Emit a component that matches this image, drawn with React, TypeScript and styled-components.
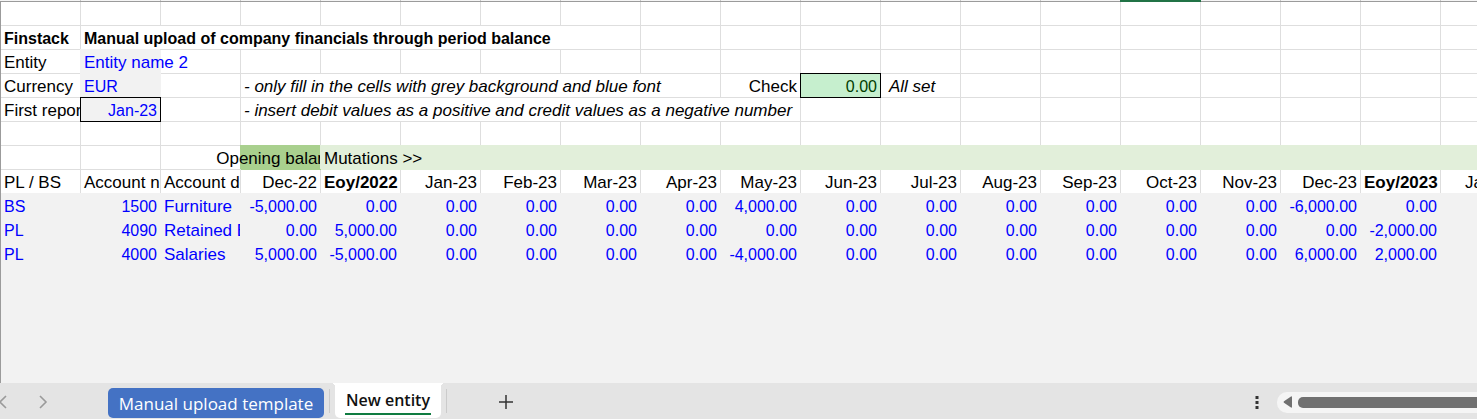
import React from "react";
import styled, { createGlobalStyle, css } from "styled-components";

const GRID = "#dedede";
const INPUT = "#f2f2f2";
const BLUE = "#0000ff";
const COLUMN = 80;

const GlobalStyle = createGlobalStyle`
  * { box-sizing: border-box; }
  body { margin: 0; background: #fff; overflow: hidden; }
`;

const Workbook = styled.div`
  display: flex;
  flex-direction: column;
  min-height: 100vh;
  overflow: hidden;
  font-family: "Liberation Sans", Arial, sans-serif;
  font-size: 17px;
  color: #000;
`;

const ColumnStrip = styled.div`
  display: flex;
  height: 2px;
  padding-left: 1px;
  background: #f5f5f5;
  border-bottom: 1px solid #9b9b9b;
`;

const ColumnEdge = styled.div<{ $selected?: boolean }>`
  flex: 0 0 ${COLUMN}px;
  height: 1px;
  border-right: 1px solid #c8c8c8;
  ${(p) =>
    p.$selected &&
    css`
      height: 2px;
      border-color: #217346;
      background: #217346;
      box-shadow: -1px 0 0 #217346;
    `}
`;

const Sheet = styled.main`
  flex: 1;
  overflow: hidden;
  background: ${INPUT};
  border-left: 1px solid #9b9b9b;
`;

const Grid = styled.table`
  table-layout: fixed;
  border-collapse: separate;
  border-spacing: 0;
  background: #fff;
`;

const Column = styled.col`
  width: ${COLUMN}px;
`;

type Fill = "input" | "opening" | "band" | "ok";

const fills: Record<Fill, string> = {
  input: INPUT,
  opening: "#a9d08e",
  band: "#e2efda",
  ok: "#c6efce",
};

interface CellProps {
  $fill?: Fill;
  $right?: boolean;
  $boxed?: boolean;
  $bold?: boolean;
  $italic?: boolean;
  $clip?: boolean;
  $indent?: boolean;
  $compact?: boolean;
}

const cellStyle = css<CellProps>`
  height: 24px;
  padding: 2px 3px 0;
  font-size: ${(p) => (p.$compact ? 16 : 17)}px;
  line-height: 21px;
  white-space: nowrap;
  text-align: ${(p) => (p.$right ? "right" : "left")};
  font-weight: ${(p) => (p.$bold ? 700 : 400)};
  font-style: ${(p) => (p.$italic ? "italic" : "normal")};
  border-right: 1px solid ${GRID};
  border-bottom: 1px solid ${GRID};
  ${(p) => p.$clip && "overflow: hidden;"}
  ${(p) => p.$indent && "padding-left: 8px;"}
  ${(p) =>
    p.$fill &&
    css`
      background: ${fills[p.$fill]};
      border-color: ${fills[p.$fill]};
      box-shadow: -1px -1px 0 ${fills[p.$fill]};
    `}
  ${(p) => p.$fill === "input" && `color: ${BLUE};`}
  ${(p) => p.$fill === "ok" && "color: #003c00;"}
  ${(p) =>
    p.$boxed &&
    css`
      border-color: #000;
      box-shadow: -1px 0 0 #000, 0 -1px 0 #000, -1px -1px 0 #000;
    `}
`;

const Cell = styled.td<CellProps>`
  ${cellStyle}
`;

const HeadCell = styled.th<CellProps>`
  ${cellStyle}
`;

/* Centred text that may run into the empty cell on its left, never to the right. */
const SpillLeft = styled.div`
  display: flex;
  justify-content: center;
  clip-path: inset(0 -3px 0 -80px);
`;

const TabBar = styled.footer`
  display: flex;
  align-items: center;
  height: 36px;
  background: #e4e4e4;
  font-family: "Open Sans", "Noto Sans", sans-serif;
  overflow: hidden;
`;

const IconButton = styled.button`
  display: flex;
  align-items: center;
  justify-content: center;
  flex: none;
  width: 20px;
  height: 36px;
  padding: 0;
  border: 0;
  background: none;
`;

const NavButtons = styled.nav`
  display: flex;
  gap: 20px;
  width: 118px;
  margin-left: -10px;
  padding-top: 2px;
`;

const SheetTab = styled.button`
  flex: none;
  align-self: flex-end;
  width: 216px;
  height: 30px;
  margin-bottom: 1px;
  padding: 2px 0 0;
  border: 0;
  border-radius: 5px;
  background: #4472c4;
  color: #fff;
  font: 400 17px/28px "Open Sans", "Noto Sans", sans-serif;
  white-space: nowrap;
`;

const ActiveTab = styled.button`
  position: relative;
  flex: none;
  align-self: flex-start;
  width: 106px;
  height: 35px;
  padding: 4px 10px 3px;
  border: 0;
  border-radius: 0 0 5px 5px;
  background: #fff;
  color: #111;
  font: 600 16px/26px "Open Sans", "Noto Sans", sans-serif;
  white-space: nowrap;

  &::before,
  &::after {
    content: "";
    position: absolute;
    top: 0;
    width: 4px;
    height: 4px;
  }
  &::before {
    right: 100%;
    background: radial-gradient(circle at 0 100%, transparent 4px, #fff 4px);
  }
  &::after {
    left: 100%;
    background: radial-gradient(circle at 100% 100%, transparent 4px, #fff 4px);
  }
`;

const TabLabel = styled.span`
  display: flex;
  justify-content: center;
  height: 28px;
  border-bottom: 2px solid #107c41;
`;

const Separator = styled.span`
  flex: none;
  width: 1px;
  height: 24px;
  margin: 0 5px;
  background: #cbcbcb;
`;

const AddButton = styled(IconButton)`
  margin-left: 44px;
  padding-top: 2px;
`;

const MoreButton = styled(IconButton)`
  margin-left: auto;
  margin-right: 10px;
  padding-top: 4px;
`;

const Scroller = styled.div`
  display: flex;
  align-items: center;
  flex: none;
  gap: 5px;
  width: 200px;
  height: 21px;
  margin-top: 2px;
  padding-left: 6px;
  border-radius: 10px 0 0 10px;
  background: #f5f5f5;
`;

const ScrollArrow = styled(IconButton)`
  width: 10px;
  height: 21px;
`;

const ScrollThumb = styled.div`
  flex: 1;
  height: 11px;
  border-radius: 5px 0 0 5px;
  background: #707070;
`;

const COLUMNS = 19;

const periods = [
  "Dec-22", "Eoy/2022", "Jan-23", "Feb-23", "Mar-23", "Apr-23", "May-23", "Jun-23",
  "Jul-23", "Aug-23", "Sep-23", "Oct-23", "Nov-23", "Dec-23", "Eoy/2023", "Jan-24",
];

interface Account {
  kind: string;
  number: string;
  name: string;
  values: Record<string, string>;
}

const accounts: Account[] = [
  {
    kind: "BS",
    number: "1500",
    name: "Furniture",
    values: { "Dec-22": "-5,000.00", "May-23": "4,000.00", "Dec-23": "-6,000.00" },
  },
  {
    kind: "PL",
    number: "4090",
    name: "Retained Earnings",
    values: { "Eoy/2022": "5,000.00", "Eoy/2023": "-2,000.00" },
  },
  {
    kind: "PL",
    number: "4000",
    name: "Salaries",
    values: {
      "Dec-22": "5,000.00",
      "Eoy/2022": "-5,000.00",
      "May-23": "-4,000.00",
      "Dec-23": "6,000.00",
      "Eoy/2023": "2,000.00",
    },
  },
];

const range = (n: number) => Array.from({ length: n }, (_, i) => i);

const Blanks = ({ count }: { count: number }) => (
  <>
    {range(count).map((i) => (
      <Cell key={i} />
    ))}
  </>
);

export default function App() {
  return (
    <>
      <GlobalStyle />
      <Workbook>
        <ColumnStrip>
          {range(COLUMNS).map((i) => (
            <ColumnEdge key={i} $selected={i === 14} />
          ))}
        </ColumnStrip>
        <Sheet>
          <Grid style={{ width: COLUMNS * COLUMN }}>
            <colgroup>
              {range(COLUMNS).map((i) => (
                <Column key={i} />
              ))}
            </colgroup>
            <tbody>
              <tr>
                <Blanks count={COLUMNS} />
              </tr>
              <tr>
                <Cell $bold $compact>
                  Finstack
                </Cell>
                <Cell $bold $compact colSpan={7}>
                  Manual upload of company financials through period balance
                </Cell>
                <Blanks count={11} />
              </tr>
              <tr>
                <Cell>Entity</Cell>
                <Cell $fill="input">Entity name 2</Cell>
                <Blanks count={17} />
              </tr>
              <tr>
                <Cell>Currency</Cell>
                <Cell $fill="input" $compact>
                  EUR
                </Cell>
                <Blanks count={1} />
                <Cell $italic colSpan={6}>
                  - only fill in the cells with grey background and blue font
                </Cell>
                <Cell $right>Check</Cell>
                <Cell $fill="ok" $boxed $right $compact>
                  0.00
                </Cell>
                <Cell $italic $indent>
                  All set
                </Cell>
                <Blanks count={7} />
              </tr>
              <tr>
                <Cell $clip>First reporting period</Cell>
                <Cell $fill="input" $boxed $right $compact>
                  Jan-23
                </Cell>
                <Blanks count={1} />
                <Cell $italic colSpan={7}>
                  - insert debit values as a positive and credit values as a negative number
                </Cell>
                <Blanks count={9} />
              </tr>
              <tr>
                <Blanks count={COLUMNS} />
              </tr>
              <tr>
                <Blanks count={3} />
                <Cell $fill="opening">
                  <SpillLeft>Opening balance</SpillLeft>
                </Cell>
                <Cell $fill="band" colSpan={15}>
                  Mutations &gt;&gt;
                </Cell>
              </tr>
              <tr>
                <HeadCell scope="col">PL / BS</HeadCell>
                <HeadCell scope="col" $clip>
                  Account number
                </HeadCell>
                <HeadCell scope="col" $clip>
                  Account description
                </HeadCell>
                {periods.map((p) => (
                  <HeadCell key={p} scope="col" $right $bold={p.startsWith("Eoy")}>
                    {p}
                  </HeadCell>
                ))}
              </tr>
              {accounts.map((a) => (
                <tr key={a.number}>
                  <Cell $fill="input" $compact>
                    {a.kind}
                  </Cell>
                  <Cell $fill="input" $right $compact>
                    {a.number}
                  </Cell>
                  <Cell $fill="input" $clip>
                    {a.name}
                  </Cell>
                  {periods.map((p) => (
                    <Cell key={p} $fill="input" $right $compact>
                      {a.values[p] ?? "0.00"}
                    </Cell>
                  ))}
                </tr>
              ))}
            </tbody>
          </Grid>
        </Sheet>
        <TabBar>
          <NavButtons aria-label="Scroll sheets">
            <IconButton aria-label="Previous sheet">
              <svg width="20" height="14" viewBox="0 0 20 14" fill="none" stroke="#9a9a9a" strokeWidth="1.6">
                <path d="M16 1 L10 7 L16 13" />
              </svg>
            </IconButton>
            <IconButton aria-label="Next sheet">
              <svg width="20" height="14" viewBox="0 0 20 14" fill="none" stroke="#9a9a9a" strokeWidth="1.6">
                <path d="M10 1 L16 7 L10 13" />
              </svg>
            </IconButton>
          </NavButtons>
          <SheetTab>Manual upload template</SheetTab>
          <Separator />
          <ActiveTab>
            <TabLabel>New entity</TabLabel>
          </ActiveTab>
          <Separator />
          <AddButton aria-label="New sheet">
            <svg width="16" height="16" viewBox="0 0 16 16" stroke="#333" strokeWidth="1.5">
              <path d="M8 1v14M1 8h14" />
            </svg>
          </AddButton>
          <MoreButton aria-label="Resize tab bar">
            <svg width="4" height="14" viewBox="0 0 4 14" fill="#333">
              <path d="M.5 0h3v3h-3zM.5 5h3v3h-3zM.5 10h3v3h-3z" />
            </svg>
          </MoreButton>
          <Scroller>
            <ScrollArrow aria-label="Scroll left">
              <svg width="10" height="12" viewBox="0 0 10 12" fill="#707070">
                <path d="M8 .5Q9 0 9 1.2V10.8Q9 12 8 11.5L1 6.8Q0 6 1 5.2Z" />
              </svg>
            </ScrollArrow>
            <ScrollThumb />
          </Scroller>
        </TabBar>
      </Workbook>
    </>
  );
}
